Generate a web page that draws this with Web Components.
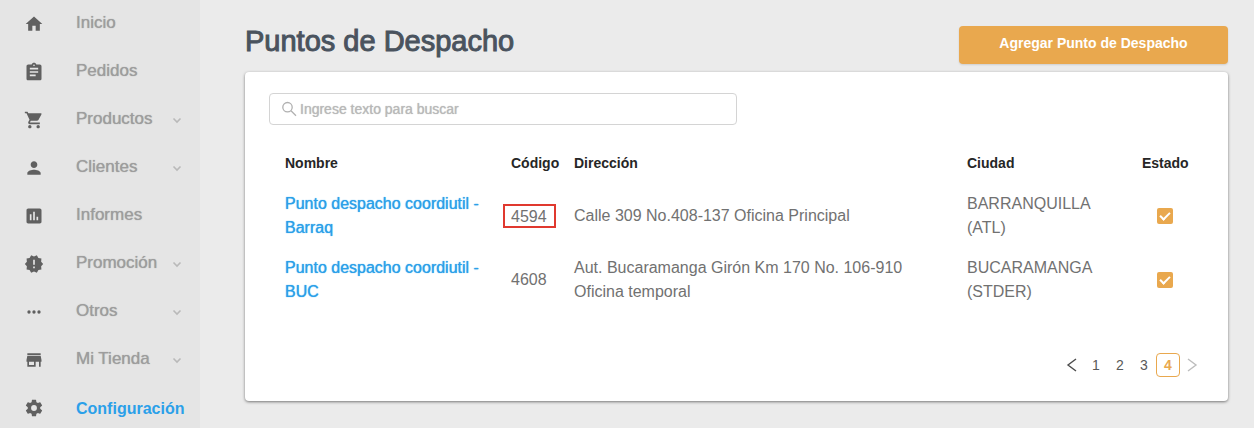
<!DOCTYPE html>
<html lang="es">
<head>
<meta charset="utf-8">
<meta name="viewport" content="width=device-width, initial-scale=1">
<title>Puntos de Despacho</title>
<style>
html,body{margin:0;min-height:100%}
body{background:#ebebeb;font-family:"Liberation Sans",Arial,sans-serif;--accent:#e9a84e;--link:#2ba0e9}
</style>
</head>
<body>

<template id="app-shell"><style>
:host{display:flex;min-height:100vh}
nav{flex:none;width:200px;background:#e5e5e5}
main{flex:1;min-width:0;padding:26px 26px 26px 45px}
</style><nav><slot name="menu"></slot></nav><main><slot></slot></main></template>

<template id="menu-item"><style>
:host{display:block}
a{display:flex;align-items:center;height:48px;padding:0 16px 0 24px;color:#9d9d9d;font-size:17px;text-decoration:none;text-shadow:0 0 1px currentColor}
:host([active]) a{color:var(--link);font-size:16px;font-weight:bold;text-shadow:none}
.icon{flex:none;width:20px;height:20px;fill:#606060}
.label{flex:1;margin-left:32px;padding-bottom:2px;line-height:24px;white-space:nowrap}
:host([active]) .label{padding:2px 0 0}
.arrow{display:none;width:14px;height:14px;fill:none;stroke:#b9b9b9;stroke-width:1.6}
:host([submenu]) .arrow{display:block}
</style><a href="#"><svg class="icon" viewBox="0 0 24 24" aria-hidden="true"><path/></svg><span class="label"><slot></slot></span><svg class="arrow" viewBox="0 0 14 14" aria-hidden="true"><path d="M3.500 5.500L7 9l3.500-3.500"/></svg></a></template>

<template id="page-head"><style>
:host{display:flex;justify-content:space-between;align-items:center;margin-bottom:8px}
h1{margin:0;padding-bottom:8px;font-size:29px;line-height:30px;font-weight:normal;color:#4a535e;-webkit-text-stroke:1px #4a535e}
button{width:269px;height:38px;padding:0 0 4px;border:0;border-radius:4px;background:var(--accent);color:#fff;font:bold 14px "Liberation Sans",Arial,sans-serif;box-shadow:0 1px 2px rgba(0,0,0,.12);cursor:pointer}
</style><h1><slot></slot></h1><button type="button"><slot name="action"></slot></button></template>

<template id="page-card"><style>
:host{display:block;padding:21px 24px 24px;border-radius:4px;background:#fff;box-shadow:0 1px 3px rgba(0,0,0,.5)}
</style><slot></slot></template>

<template id="search-box"><style>
:host{display:block;width:50%}
label{display:flex;align-items:center;gap:3px;box-sizing:border-box;height:32px;padding:0 11px;border:1px solid #d4d4d4;border-radius:4px}
svg{flex:none;width:16px;height:16px;fill:none;stroke:#b0b0b0;stroke-width:1.3}
input{flex:1;min-width:0;padding:0;border:0;outline:0;background:none;font:14px "Liberation Sans",Arial,sans-serif;color:#606060}
input::placeholder{color:#b9b9b9;opacity:1;text-shadow:0 0 1px #b9b9b9}
</style><label><svg viewBox="0 0 16 16" aria-hidden="true"><circle cx="6.5" cy="6.2" r="4.7"/><path d="M10 9.7l5 5"/></svg><input type="text" aria-label="Buscar"></label></template>

<template id="dispatch-table"><style>
:host{display:block;margin:18px 8px 0}
table{width:100%;table-layout:fixed;border-collapse:collapse}
th,td{padding:8px;text-align:left;vertical-align:middle;line-height:24px}
th{color:#262626;font-size:14px;font-weight:bold}
td{padding:9px 8px 7px;color:#717171;font-size:16px}
td a{color:var(--link);text-decoration:none;text-shadow:0 0 1px currentColor}
.name{width:210px}
.code{width:47px}
.city{width:159px}
.state{width:46px;text-align:center}
mark{display:inline-block;margin:0 -8px;padding:2px 7px 0 6px;border:2px solid #e0392f;background:none;color:inherit;line-height:18px}
input{appearance:none;display:block;width:16px;height:16px;margin:0 auto;border-radius:2px;background:var(--accent)}
input:checked::before{content:"";display:block;box-sizing:border-box;width:10px;height:6px;margin:4px 3px;border:solid #fff;border-width:0 0 2px 2px;transform:rotate(-45deg)}
</style><table><thead><tr><th class="name">Nombre</th><th class="code">Código</th><th>Dirección</th><th class="city">Ciudad</th><th class="state">Estado</th></tr></thead><tbody></tbody></table></template>

<template id="page-nav"><style>
:host{display:block;margin-top:42px}
nav{display:flex;justify-content:flex-end}
button{width:24px;height:24px;padding:0;border:1px solid transparent;border-radius:4px;background:none;color:#595959;font:14px "Liberation Sans",Arial,sans-serif;cursor:pointer}
button[aria-current]{border-color:var(--accent);color:var(--accent);font-weight:bold}
svg{display:block;width:14px;height:14px;margin:0 auto;fill:none;stroke:#4c4c4c;stroke-width:1.4}
button:disabled svg{stroke:#bdbdbd}
</style><nav aria-label="Páginas"></nav></template>

<app-shell>
	<menu-item slot="menu" icon="home">Inicio</menu-item>
	<menu-item slot="menu" icon="orders">Pedidos</menu-item>
	<menu-item slot="menu" icon="cart" submenu>Productos</menu-item>
	<menu-item slot="menu" icon="person" submenu>Clientes</menu-item>
	<menu-item slot="menu" icon="chart">Informes</menu-item>
	<menu-item slot="menu" icon="badge" submenu>Promoción</menu-item>
	<menu-item slot="menu" icon="dots" submenu>Otros</menu-item>
	<menu-item slot="menu" icon="store" submenu>Mi Tienda</menu-item>
	<menu-item slot="menu" icon="gear" active>Configuración</menu-item>
	<page-head>Puntos de Despacho<span slot="action">Agregar Punto de Despacho</span></page-head>
	<page-card>
		<search-box placeholder="Ingrese texto para buscar"></search-box>
		<dispatch-table></dispatch-table>
		<page-nav pages="4" current="4"></page-nav>
	</page-card>
</app-shell>

<script>
const ICONS = {
	home: 'M10 20v-6h4v6h5v-8h3L12 3 2 12h3v8z',
	orders: 'M19 3h-4.2C14.4 1.8 13.3 1 12 1s-2.4.8-2.8 2H5c-1.1 0-2 .9-2 2v15c0 1.100.9 2 2 2h14c1.100 0 2-.9 2-2V5c0-1.100-.9-2-2-2zm-7 0c.6 0 1 .4 1 1s-.4 1-1 1-1-.4-1-1 .4-1 1-1zm2 14H7v-2h7v2zm3-4H7v-2h10v2zm0-4H7V7h10v2z',
	cart: 'M7 18c-1.100 0-2 .9-2 2s.9 2 2 2 2-.9 2-2-.9-2-2-2zM1 2v2h2l3.600 7.600-1.350 2.450C4.520 15.370 5.480 17 7 17h12v-2H7.420c-.14 0-.25-.11-.25-.25l.03-.12.9-1.630h7.450c.75 0 1.410-.41 1.750-1.030l3.580-6.490A1 1 0 0 0 20 4H5.210l-.94-2H1zm16 16c-1.100 0-2 .9-2 2s.9 2 2 2 2-.9 2-2-.9-2-2-2z',
	person: 'M12 12c2.210 0 4-1.790 4-4s-1.790-4-4-4-4 1.790-4 4 1.790 4 4 4zm0 2c-2.670 0-8 1.340-8 4v2h16v-2c0-2.660-5.330-4-8-4z',
	chart: 'M19 3H5c-1.100 0-2 .9-2 2v14c0 1.100.9 2 2 2h14c1.100 0 2-.9 2-2V5c0-1.100-.9-2-2-2zM9 17H7v-7h2v7zm4 0h-2V7h2v10zm4 0h-2v-4h2v4z',
	badge: 'M23 12l-2.440-2.780.34-3.680-3.610-.82-1.890-3.180L12 3 8.600 1.540 6.710 4.720l-3.610.81.34 3.680L1 12l2.440 2.780-.34 3.690 3.610.82 1.890 3.180L12 21l3.400 1.460 1.890-3.180 3.610-.82-.34-3.680L23 12zm-10 5h-2v-2h2v2zm0-4h-2V7h2v6z',
	dots: 'M6 10a2 2 0 1 0 0 4 2 2 0 0 0 0-4zm6 0a2 2 0 1 0 0 4 2 2 0 0 0 0-4zm6 0a2 2 0 1 0 0 4 2 2 0 0 0 0-4z',
	store: 'M20 4H4v2h16V4zm1 10v-2l-1-5H4l-1 5v2h1v6h10v-6h4v6h2v-6h1zm-9 4H6v-4h6v4z',
	gear: 'M19.430 12.980c.04-.32.07-.64.07-.98s-.03-.66-.07-.98l2.110-1.650c.19-.15.24-.42.12-.64l-2-3.460c-.12-.22-.39-.3-.61-.22l-2.490 1c-.52-.4-1.080-.73-1.690-.98l-.38-2.650A.49.49 0 0 0 14 2h-4c-.25 0-.46.18-.49.42l-.38 2.650c-.61.25-1.170.59-1.690.98l-2.490-1c-.23-.09-.49 0-.61.22l-2 3.460c-.13.22-.07.49.12.64l2.110 1.650c-.04.32-.07.65-.07.98s.03.66.07.98l-2.110 1.650c-.19.15-.24.42-.12.64l2 3.460c.12.22.39.3.61.22l2.490-1c.52.4 1.080.73 1.690.98l.38 2.650c.03.24.24.42.49.42h4c.25 0 .46-.18.49-.42l.38-2.650c.61-.25 1.170-.59 1.690-.98l2.490 1c.23.09.49 0 .61-.22l2-3.460c.12-.22.07-.49-.12-.64l-2.110-1.650zM12 15.500a3.500 3.500 0 1 1 0-7 3.500 3.500 0 0 1 0 7z'
};

const POINTS = [
	{name: 'Punto despacho coordiutil - Barraq', code: '4594', address: 'Calle 309 No.408-137 Oficina Principal', city: 'BARRANQUILLA (ATL)', marked: true},
	{name: 'Punto despacho coordiutil - BUC', code: '4608', address: 'Aut. Bucaramanga Girón Km 170 No. 106-910 Oficina temporal', city: 'BUCARAMANGA (STDER)'}
];

// clones the template that has the same id as the tag
class BaseElement extends HTMLElement {
	constructor() {
		super();
		this.attachShadow({mode: 'open'}).appendChild(document.querySelector('template#' + this.localName).content.cloneNode(true));
		this.$ = q => this.shadowRoot.querySelector(q);
	}
}

customElements.define('app-shell', class extends BaseElement {});
customElements.define('page-head', class extends BaseElement {});
customElements.define('page-card', class extends BaseElement {});

customElements.define('menu-item', class extends BaseElement {
	connectedCallback() {
		this.$('.icon path').setAttribute('d', ICONS[this.getAttribute('icon')]);
		if (this.hasAttribute('active')) this.$('a').setAttribute('aria-current', 'page');
	}
});

customElements.define('search-box', class extends BaseElement {
	connectedCallback() {
		this.$('input').placeholder = this.getAttribute('placeholder');
	}
});

customElements.define('dispatch-table', class extends BaseElement {
	connectedCallback() {
		this.$('tbody').innerHTML = POINTS.map(p => `<tr>
			<td><a href="#">${p.name}</a></td>
			<td>${p.marked ? `<mark>${p.code}</mark>` : p.code}</td>
			<td>${p.address}</td>
			<td>${p.city}</td>
			<td><input type="checkbox" aria-label="Estado de ${p.name}" checked></td>
		</tr>`).join('');
	}
});

customElements.define('page-nav', class extends BaseElement {
	connectedCallback() {
		const pages = +this.getAttribute('pages');
		const current = +this.getAttribute('current');
		let html = `<button type="button" aria-label="Anterior" ${current == 1 ? 'disabled' : ''}><svg viewBox="0 0 14 14"><path d="M11 1L3 7l8 6"/></svg></button>`;
		for (let i = 1; i <= pages; i++) {
			html += `<button type="button" ${i == current ? 'aria-current="page"' : ''}>${i}</button>`;
		}
		html += `<button type="button" aria-label="Siguiente" ${current == pages ? 'disabled' : ''}><svg viewBox="0 0 14 14"><path d="M3 1l8 6-8 6"/></svg></button>`;
		this.$('nav').innerHTML = html;
	}
});
</script>
</body>
</html>
